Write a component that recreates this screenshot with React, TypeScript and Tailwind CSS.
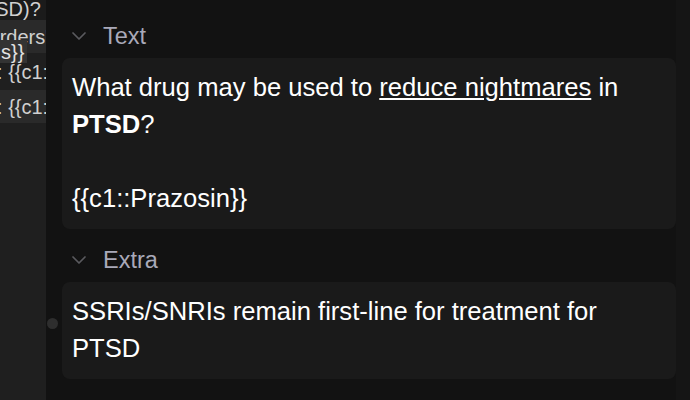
import { ChevronDown } from "lucide-react";

function FieldLabel({ name }: { name: string }) {
  return (
    <div className="flex h-[32px] items-center pl-[5px]">
      <ChevronDown size={24} strokeWidth={1.75} className="text-[#5a5a5e]" />
      <span className="ml-[12px] text-[23.5px] leading-[32px] text-[#a9a9b9]">{name}</span>
    </div>
  );
}

function FieldBox({ children }: { children: React.ReactNode }) {
  return (
    <div className="rounded-lg bg-[#1a1a1a] px-[10px] pt-[11px] pb-[12px] text-[25.6px] leading-[37px] text-white">
      {children}
    </div>
  );
}

function CardList() {
  return (
    <aside className="relative w-[46px] shrink-0 overflow-hidden bg-[#1f1f1f] text-[20px] text-[#d0d0d0]">
      <div className="h-[20px] whitespace-nowrap bg-[#1b1b1b] leading-[19px]">
        <div className="ml-[-37px]">(PTSD)?</div>
      </div>
      <div className="flex h-[33px] items-center whitespace-nowrap bg-[#2a2a2a]">
        <div className="ml-[-37px]">disorders' {"{{c1::SSRIs}}"}</div>
      </div>
      <div className="flex h-[37px] items-center whitespace-nowrap">
        <div className="ml-[-3px]">: {"{{c1::Prazosin}}"}</div>
      </div>
      <div className="flex h-[33px] items-center whitespace-nowrap bg-[#2a2a2a]">
        <div className="ml-[-3px]">: {"{{c1::Prazosin}}"}</div>
      </div>

      {/* wrapped second line of the selected cell spilling over */}
      <div className="absolute left-0 top-[40px] flex h-[23px] w-[27px] items-center whitespace-nowrap bg-[#333333] pl-[1px] text-[#e2e2e2]">
        s{"}}"}
      </div>
    </aside>
  );
}

export default function App() {
  return (
    <div className="flex h-[400px] w-[690px] overflow-hidden bg-[#121212] font-['Liberation_Sans',Arial,sans-serif]">
      <CardList />

      <main className="relative flex-1 pl-[16px] pt-[20px]">
        <FieldLabel name="Text" />
        <div className="mt-[6px]">
          <FieldBox>
            <div>
              What drug may be used to <u>reduce nightmares</u> in <b>PTSD</b>?
            </div>
            <div className="h-[37px]" />
            <div>{"{{c1::Prazosin}}"}</div>
          </FieldBox>
        </div>

        <div className="mt-[15px]">
          <FieldLabel name="Extra" />
        </div>
        <div className="mt-[6px]">
          <FieldBox>
            <div>SSRIs/SNRIs remain first-line for treatment for PTSD</div>
          </FieldBox>
        </div>

        {/* splitter handle */}
        <div className="absolute left-[1px] top-[318px] h-[11px] w-[11px] rounded-full bg-[#2e2e2e]" />
      </main>

      <div className="w-[14px] shrink-0 bg-[#151515]" />
    </div>
  );
}
